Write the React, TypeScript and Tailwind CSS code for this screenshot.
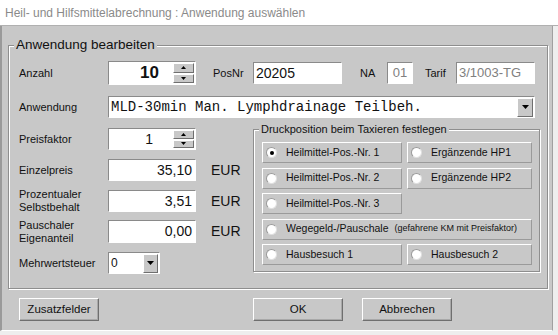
import React from "react";

const Down = () => (
  <svg width="7" height="4" viewBox="0 0 7 4"><path d="M0 0h7L3.5 4z" fill="#000" /></svg>
);
const SmallUp = () => (
  <svg width="5" height="3" viewBox="0 0 5 3"><path d="M0 3h5L2.5 0z" fill="#000" /></svg>
);
const SmallDown = () => (
  <svg width="5" height="3" viewBox="0 0 5 3"><path d="M0 0h5L2.5 3z" fill="#000" /></svg>
);

function SpinBtns() {
  return (
    <div className="flex flex-col w-[22px] h-full py-[1px] pr-[1px] gap-[1px]">
      <div className="flex-1 flex items-center justify-center bg-[#c8c8c8] border border-t-white border-l-white border-b-[#6f6f6f] border-r-[#6f6f6f]">
        <SmallUp />
      </div>
      <div className="flex-1 flex items-center justify-center bg-[#c8c8c8] border border-t-white border-l-white border-b-[#6f6f6f] border-r-[#6f6f6f]">
        <SmallDown />
      </div>
    </div>
  );
}

function Radio({ label, checked, w, small }: { label: string; checked?: boolean; w: string; small?: string }) {
  return (
    <div className={`${w} h-[21px] flex items-center border border-t-white border-l-white border-b-[#9a9a9a] border-r-[#9a9a9a] pl-[3px]`}>
      <div className="w-[11px] h-[11px] rounded-full bg-white border border-t-[#9a9a9a] border-l-[#9a9a9a] border-b-[#e0e0e0] border-r-[#e0e0e0] flex items-center justify-center">
        {checked && <div className="w-[4px] h-[4px] rounded-full bg-black" />}
      </div>
      <span className="ml-[9px] text-[10.5px] text-[#111]">{label}</span>
      {small && <span className="ml-[6px] text-[9px] text-[#111]">{small}</span>}
    </div>
  );
}

function EurRow({ label, value, h, mt }: { label: React.ReactNode; value: string; h: string; mt: string }) {
  return (
    <div className={`flex items-center ${h} ${mt}`}>
      <div className="w-[89px] text-[11px] leading-[13px] text-[#111]">{label}</div>
      <div className="w-[88px] h-full bg-white border border-t-[#8a8a8a] border-l-[#8a8a8a] border-b-white border-r-white flex items-center justify-end pr-[3px] text-[14px] text-[#111]">
        {value}
      </div>
      <div className="ml-[15px] text-[14px] text-[#111]">EUR</div>
    </div>
  );
}

export default function App() {
  return (
    <div className="w-[558px] h-[335px] bg-[#eeeeee] overflow-hidden font-['Liberation_Sans',Arial,sans-serif]">
      <div className="h-[26px] bg-white flex items-center pl-[5px] text-[12px] text-[#8a8a8a] border-b border-[#b0b0b0]">
        Heil- und Hilfsmittelabrechnung : Anwendung auswählen
      </div>
      <div className="w-[553px] h-[305px] bg-[#c8c8c8] border-l-2 border-l-[#9a9a9a] border-r border-r-[#a0a0a0] border-b border-b-white flex flex-col">
        <div className="relative mt-[19px] ml-[6px] w-[540px] h-[244px] border border-[#8e8e8e] shadow-[inset_1px_1px_0_#ffffff,1px_1px_0_#ffffff] pl-[10px] pt-[15px]">
          <div className="absolute top-[-9px] left-[5px] px-[2px] bg-[#c8c8c8] text-[13.5px] leading-[16px] text-[#111]">
            Anwendung bearbeiten
          </div>

          <div className="flex items-center h-[24px]">
            <div className="w-[89px] text-[11px] text-[#111]">Anzahl</div>
            <div className="flex w-[88px] h-[24px] bg-white border border-t-[#8a8a8a] border-l-[#8a8a8a] border-b-white border-r-white">
              <div className="flex-1 flex items-center justify-end pr-[14px] text-[17px] font-bold text-[#111]">10</div>
              <SpinBtns />
            </div>
            <div className="ml-[17px] w-[40px] text-[11px] text-[#111]">PosNr</div>
            <div className="w-[89px] h-[22px] bg-white border border-t-[#8a8a8a] border-l-[#8a8a8a] border-b-white border-r-white flex items-center pl-[2px] text-[14px] text-[#111]">
              20205
            </div>
            <div className="ml-[18px] w-[27px] text-[11px] text-[#111]">NA</div>
            <div className="w-[26px] h-[22px] bg-white border border-t-[#8a8a8a] border-l-[#8a8a8a] border-b-white border-r-white flex items-center justify-center text-[13px] text-[#808080]">
              01
            </div>
            <div className="ml-[12px] w-[31px] text-[11px] text-[#111]">Tarif</div>
            <div className="w-[79px] h-[22px] bg-white border border-t-[#8a8a8a] border-l-[#8a8a8a] border-b-white border-r-white flex items-center pl-[2px] text-[13px] text-[#808080]">
              3/1003-TG
            </div>
          </div>

          <div className="flex items-center h-[22px] mt-[11px]">
            <div className="w-[89px] text-[11px] text-[#111]">Anwendung</div>
            <div className="w-[427px] h-[22px] bg-white border border-t-[#8a8a8a] border-l-[#8a8a8a] border-b-white border-r-white flex items-center">
              <div className="flex-1 pl-[2px] font-['Liberation_Mono','Courier_New',monospace] text-[14px] text-[#111] whitespace-nowrap">
                MLD-30min Man. Lymphdrainage Teilbeh.
              </div>
              <div className="w-[16px] h-[19px] mr-[1px] bg-[#c8c8c8] border border-t-white border-l-white border-b-[#6f6f6f] border-r-[#6f6f6f] flex items-center justify-center">
                <Down />
              </div>
            </div>
          </div>

          <div className="flex mt-[10px]">
            <div className="w-[234px] flex flex-col">
              <div className="flex items-center h-[22px]">
                <div className="w-[89px] text-[11px] text-[#111]">Preisfaktor</div>
                <div className="flex w-[88px] h-[22px] bg-white border border-t-[#8a8a8a] border-l-[#8a8a8a] border-b-white border-r-white">
                  <div className="flex-1 flex items-center justify-end pr-[20px] text-[14px] text-[#111]">1</div>
                  <SpinBtns />
                </div>
              </div>
              <EurRow label="Einzelpreis" value="35,10" h="h-[22px]" mt="mt-[9px]" />
              <EurRow label={<>Prozentualer<br />Selbstbehalt</>} value="3,51" h="h-[22px]" mt="mt-[9px]" />
              <EurRow label={<>Pauschaler<br />Eigenanteil</>} value="0,00" h="h-[23px]" mt="mt-[8px]" />
              <div className="flex items-center h-[22px] mt-[9px]">
                <div className="w-[89px] text-[11px] text-[#111]">Mehrwertsteuer</div>
                <div className="w-[52px] h-[22px] bg-white border border-t-[#8a8a8a] border-l-[#8a8a8a] border-b-white border-r-white flex items-center">
                  <div className="flex-1 pl-[2px] text-[12px] text-[#111]">0</div>
                  <div className="w-[15px] h-[19px] mr-[1px] bg-[#c8c8c8] border border-t-white border-l-white border-b-[#6f6f6f] border-r-[#6f6f6f] flex items-center justify-center">
                    <Down />
                  </div>
                </div>
              </div>
            </div>

            <div className="relative mt-[1px] w-[287px] h-[143px] border border-[#8e8e8e] shadow-[inset_1px_1px_0_#ffffff,1px_1px_0_#ffffff] pl-[8px] pt-[12px] flex flex-col gap-[4.5px]">
              <div className="absolute top-[-8px] left-[5px] px-[2px] bg-[#c8c8c8] text-[11px] leading-[14px] text-[#111]">
                Druckposition beim Taxieren festlegen
              </div>
              <div className="flex gap-[5px]">
                <Radio w="w-[140px]" label="Heilmittel-Pos.-Nr. 1" checked />
                <Radio w="w-[125px]" label="Ergänzende HP1" />
              </div>
              <div className="flex gap-[5px]">
                <Radio w="w-[140px]" label="Heilmittel-Pos.-Nr. 2" />
                <Radio w="w-[125px]" label="Ergänzende HP2" />
              </div>
              <div className="flex">
                <Radio w="w-[140px]" label="Heilmittel-Pos.-Nr. 3" />
              </div>
              <div className="flex">
                <Radio w="w-[270px]" label="Wegegeld-/Pauschale" small="(gefahrene KM mit Preisfaktor)" />
              </div>
              <div className="flex gap-[5px]">
                <Radio w="w-[140px]" label="Hausbesuch 1" />
                <Radio w="w-[125px]" label="Hausbesuch 2" />
              </div>
            </div>
          </div>
        </div>

        <div className="flex mt-[9px] ml-[17px]">
          <div className="w-[80px] h-[23px] flex items-center justify-center text-[11.5px] text-[#111] border border-t-white border-l-white border-b-[#6f6f6f] border-r-[#6f6f6f] shadow-[inset_-1px_-1px_0_#a8a8a8]">
            Zusatzfelder
          </div>
          <div className="ml-[154px] w-[90px] h-[23px] flex items-center justify-center text-[11.5px] text-[#111] border border-t-white border-l-white border-b-[#6f6f6f] border-r-[#6f6f6f] shadow-[inset_-1px_-1px_0_#a8a8a8]">
            OK
          </div>
          <div className="ml-[19px] w-[90px] h-[23px] flex items-center justify-center text-[11.5px] text-[#111] border border-t-white border-l-white border-b-[#6f6f6f] border-r-[#6f6f6f] shadow-[inset_-1px_-1px_0_#a8a8a8]">
            Abbrechen
          </div>
        </div>
      </div>
    </div>
  );
}
